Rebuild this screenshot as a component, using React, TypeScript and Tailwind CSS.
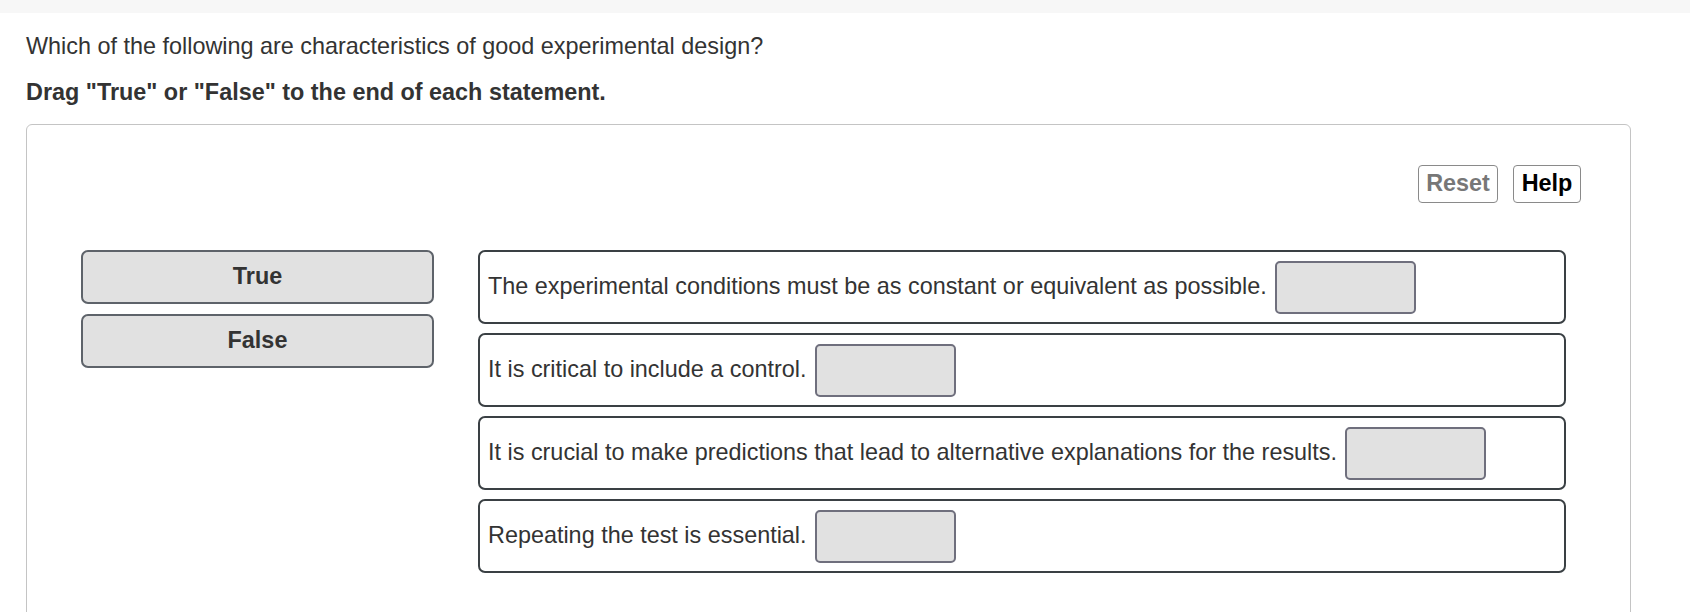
import React from "react";

const statements = [
  "The experimental conditions must be as constant or equivalent as possible.",
  "It is critical to include a control.",
  "It is crucial to make predictions that lead to alternative explanations for the results.",
  "Repeating the test is essential.",
];

export default function App() {
  return (
    <div className="min-h-[612px] bg-white font-['Liberation_Sans',Arial,sans-serif] text-[#333]">
      <div className="h-[13px] bg-[#f7f7f7]" />

      <div className="pl-[26px] pr-[59px]">
        <p className="pt-[20px] text-[23.4px] leading-[27px]">
          Which of the following are characteristics of good experimental design?
        </p>
        <p className="mt-[19px] text-[23.4px] font-bold leading-[27px]">
          Drag "True" or "False" to the end of each statement.
        </p>

        <div className="mt-[18px] h-[520px] rounded-[6px] border border-[#c4c4c4] pl-[54px] pr-[49px] pt-[40px]">
          <div className="flex justify-end gap-[15px]">
            <button
              type="button"
              className="h-[38px] w-[80px] rounded-[4px] border border-[#8a8a8a] text-[23.4px] font-bold text-[#777]"
            >
              Reset
            </button>
            <button
              type="button"
              className="h-[38px] w-[68px] rounded-[4px] border border-[#8a8a8a] text-[23.4px] font-bold text-black"
            >
              Help
            </button>
          </div>

          <div className="mt-[47px] flex gap-[44px]">
            <div className="flex w-[353px] shrink-0 flex-col gap-[10px]">
              {["True", "False"].map((label) => (
                <div
                  key={label}
                  className="flex h-[54px] items-center justify-center rounded-[7px] border-2 border-[#5e636a] bg-[#e1e1e1] text-[23.4px] font-bold"
                >
                  {label}
                </div>
              ))}
            </div>

            <div className="flex w-[1088px] flex-col gap-[9px]">
              {statements.map((text) => (
                <div
                  key={text}
                  className="flex h-[74px] items-center gap-[8px] rounded-[7px] border-2 border-[#3a4044] pl-[8px] text-[23.4px]"
                >
                  <span>{text}</span>
                  <div className="h-[53px] w-[141px] rounded-[5px] border-2 border-[#6f6f7d] bg-[#e1e1e1]" />
                </div>
              ))}
            </div>
          </div>
        </div>
      </div>
    </div>
  );
}
